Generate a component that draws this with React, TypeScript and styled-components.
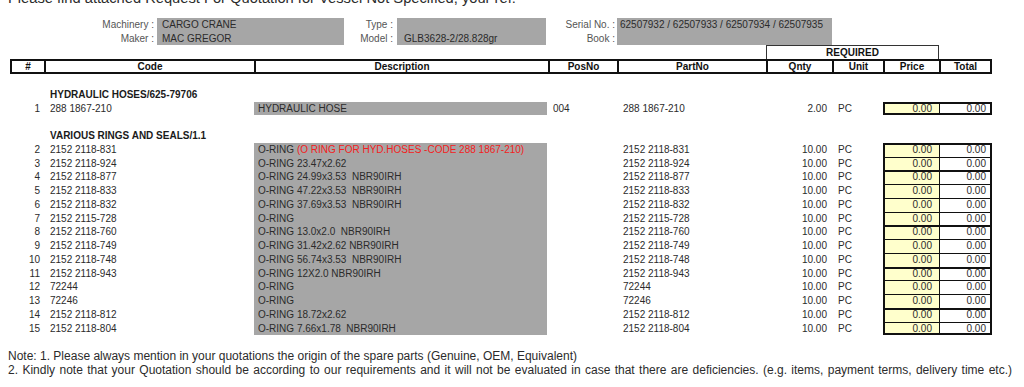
import styled, { createGlobalStyle, css } from 'styled-components';

const GlobalStyle = createGlobalStyle`
  html, body {
    margin: 0;
    background: #ffffff;
  }
  body {
    font-family: 'Liberation Sans', Arial, sans-serif;
    color: #2b2b2b;
    overflow: hidden;
  }
`;

// column widths of the quotation sheet, left to right
const COLUMNS = '34px 210px 294px 69px 149px 66px 51px 56px 53px';
const ROW = '13.75px';

type Item = {
  no: number;
  code: string;
  desc: string;
  note?: string;
  pos?: string;
  qty: string;
  heavy?: boolean;
};

const hoses: Item[] = [
  { no: 1, code: '288 1867-210', desc: 'HYDRAULIC HOSE', pos: '004', qty: '2.00', heavy: true }
];

const rings: Item[] = [
  { no: 2, code: '2152 2118-831', desc: 'O-RING ', note: '(O RING FOR HYD.HOSES -CODE 288 1867-210)', qty: '10.00', heavy: true },
  { no: 3, code: '2152 2118-924', desc: 'O-RING 23.47x2.62', qty: '10.00' },
  { no: 4, code: '2152 2118-877', desc: 'O-RING 24.99x3.53  NBR90IRH', qty: '10.00', heavy: true },
  { no: 5, code: '2152 2118-833', desc: 'O-RING 47.22x3.53  NBR90IRH', qty: '10.00' },
  { no: 6, code: '2152 2118-832', desc: 'O-RING 37.69x3.53  NBR90IRH', qty: '10.00' },
  { no: 7, code: '2152 2115-728', desc: 'O-RING', qty: '10.00' },
  { no: 8, code: '2152 2118-760', desc: 'O-RING 13.0x2.0  NBR90IRH', qty: '10.00', heavy: true },
  { no: 9, code: '2152 2118-749', desc: 'O-RING 31.42x2.62 NBR90IRH', qty: '10.00' },
  { no: 10, code: '2152 2118-748', desc: 'O-RING 56.74x3.53  NBR90IRH', qty: '10.00' },
  { no: 11, code: '2152 2118-943', desc: 'O-RING 12X2.0 NBR90IRH', qty: '10.00', heavy: true },
  { no: 12, code: '72244', desc: 'O-RING', qty: '10.00' },
  { no: 13, code: '72246', desc: 'O-RING', qty: '10.00' },
  { no: 14, code: '2152 2118-812', desc: 'O-RING 18.72x2.62', qty: '10.00', heavy: true },
  { no: 15, code: '2152 2118-804', desc: 'O-RING 7.66x1.78  NBR90IRH', qty: '10.00' }
];

export default function App() {
  return (
    <>
      <GlobalStyle />
      <Sheet>
        <Intro>Please find attached Request For Quotation for Vessel Not Specified, your ref:</Intro>
        <Info />
        <RequiredRow>
          <Required>REQUIRED</Required>
        </RequiredRow>
        <HeadRow>
          <Th>#</Th>
          <Th>Code</Th>
          <Th>Description</Th>
          <Th>PosNo</Th>
          <Th>PartNo</Th>
          <Th>Qnty</Th>
          <Th>Unit</Th>
          <Th>Price</Th>
          <Th $last>Total</Th>
        </HeadRow>
        <Blank />
        <Group title='HYDRAULIC HOSES/625-79706' items={hoses} />
        <Blank />
        <Group title='VARIOUS RINGS AND SEALS/1.1' items={rings} />
        <Blank />
        <Notes>
          <NoteLine>Note: 1. Please always mention in your quotations the origin of the spare parts (Genuine, OEM, Equivalent)</NoteLine>
          <NoteLine $spread={1.05}>
            2. Kindly note that your Quotation should be according to our requirements and it will not be evaluated in
            case that there are deficiencies. (e.g. items, payment terms, delivery time etc.)
          </NoteLine>
        </Notes>
      </Sheet>
    </>
  );
}

function Info() {
  return (
    <InfoGrid>
      <Label>Machinery :</Label>
      <Value $inset={5}>CARGO CRANE</Value>
      <Label $pad={4}>Type :</Label>
      <Value $inset={7} />
      <Label $pad={2}>Serial No. :</Label>
      <Value $inset={3}>62507932 / 62507933 / 62507934 / 62507935</Value>

      <Label>Maker :</Label>
      <Value $inset={5}>MAC GREGOR</Value>
      <Label $pad={4}>Model :</Label>
      <Value $inset={7}>GLB3628-2/28.828gr</Value>
      <Label $pad={2}>Book :</Label>
      <Value $inset={3} />
    </InfoGrid>
  );
}

function Group({ title, items }: { title: string; items: Item[] }) {
  return (
    <>
      <Row>
        <Cell />
        <GroupTitle>{title}</GroupTitle>
      </Row>
      {items.map((it, i) => (
        <Row key={it.no}>
          <Num>{it.no}</Num>
          <Cell $pad={6}>{it.code}</Cell>
          <Desc>
            {it.desc}
            {it.note && <Warn>{it.note}</Warn>}
          </Desc>
          <Cell $pad={5}>{it.pos ?? ''}</Cell>
          <Cell $pad={6}>{it.code}</Cell>
          <Qty>{it.qty}</Qty>
          <Cell $pad={6}>PC</Cell>
          <Price $top={it.heavy ? 2 : 1} $end={i === items.length - 1}>0.00</Price>
          <Total $top={it.heavy ? 2 : 1} $end={i === items.length - 1}>0.00</Total>
        </Row>
      ))}
    </>
  );
}

const Sheet = styled.div`
  width: 1024px;
  height: 387px;
  overflow: hidden;
`;

const Intro = styled.p`
  margin: -10px 0 0 8px;
  font-size: 14.7px;
  line-height: 17px;
  white-space: nowrap;
`;

const InfoGrid = styled.div`
  display: grid;
  grid-template-columns: 157px 187px 53px 149px 71px 215px;
  grid-template-rows: 13.5px 13.5px;
  margin-top: 11px;
  font-size: 10px;
  line-height: 13.5px;
`;

const Label = styled.div<{ $pad?: number }>`
  text-align: right;
  padding-right: ${(p) => p.$pad ?? 3}px;
  color: #555555;
  white-space: nowrap;
`;

const Value = styled.div<{ $inset: number }>`
  background: #a6a6a6;
  padding-left: ${(p) => p.$inset}px;
  color: #2b2b2b;
  white-space: nowrap;
`;

const tableRow = css`
  display: grid;
  grid-template-columns: ${COLUMNS};
  margin-left: 10px;
  width: 982px;
`;

const RequiredRow = styled.div`
  ${tableRow};
  height: 14px;
`;

const Required = styled.div`
  grid-column: 6 / 9;
  border: 1px solid #333333;
  border-bottom: none;
  font-size: 10px;
  font-weight: bold;
  line-height: 13px;
  text-align: center;
  color: #111111;
`;

const HeadRow = styled.div`
  ${tableRow};
  height: 15px;
  box-sizing: border-box;
  border-top: 2px solid #111111;
  border-bottom: 2px solid #111111;
`;

const Th = styled.div<{ $last?: boolean }>`
  border-left: 2px solid #111111;
  ${(p) => p.$last && 'border-right: 2px solid #111111;'}
  font-size: 10px;
  font-weight: bold;
  line-height: 11px;
  text-align: center;
  color: #111111;
`;

const Row = styled.div`
  ${tableRow};
  height: ${ROW};
  font-size: 10px;
  line-height: ${ROW};
  white-space: pre;
`;

const Blank = styled.div`
  height: ${ROW};
`;

const Cell = styled.div<{ $pad?: number }>`
  padding-left: ${(p) => p.$pad ?? 0}px;
  overflow: hidden;
`;

const Num = styled.div`
  text-align: right;
  padding-right: 4px;
`;

const GroupTitle = styled.div`
  grid-column: 2 / 5;
  padding-left: 6px;
  font-weight: bold;
  color: #1a1a1a;
`;

const Desc = styled.div`
  background: #a6a6a6;
  padding-left: 4px;
  margin-right: 1px;
  overflow: hidden;
`;

const Warn = styled.span`
  color: #f42020;
`;

const Qty = styled.div`
  text-align: right;
  padding-right: 5px;
`;

// cell rules are drawn as inset shadows so the text keeps the full row height
const rules = (left: number, right: number, top: number, end?: boolean) =>
  [
    `inset ${left}px 0 0 #111111`,
    right ? `inset -${right}px 0 0 #111111` : '',
    `inset 0 ${top}px 0 #111111`,
    end ? 'inset 0 -2px 0 #111111' : ''
  ]
    .filter(Boolean)
    .join(', ');

const Price = styled.div<{ $top: number; $end?: boolean }>`
  background: #ffffcc;
  box-shadow: ${(p) => rules(2, 0, p.$top, p.$end)};
  text-align: right;
  padding-right: 7px;
  line-height: 13px;
`;

const Total = styled.div<{ $top: number; $end?: boolean }>`
  background: #ffffff;
  box-shadow: ${(p) => rules(1, 2, p.$top, p.$end)};
  text-align: right;
  padding-right: 6px;
  line-height: 13px;
`;

const Notes = styled.div`
  margin-left: 8px;
  font-size: 12px;
  line-height: 14px;
  color: #2b2b2b;
  white-space: nowrap;
`;

const NoteLine = styled.p<{ $spread?: number }>`
  margin: 0;
  word-spacing: ${(p) => p.$spread ?? 0}px;
`;
